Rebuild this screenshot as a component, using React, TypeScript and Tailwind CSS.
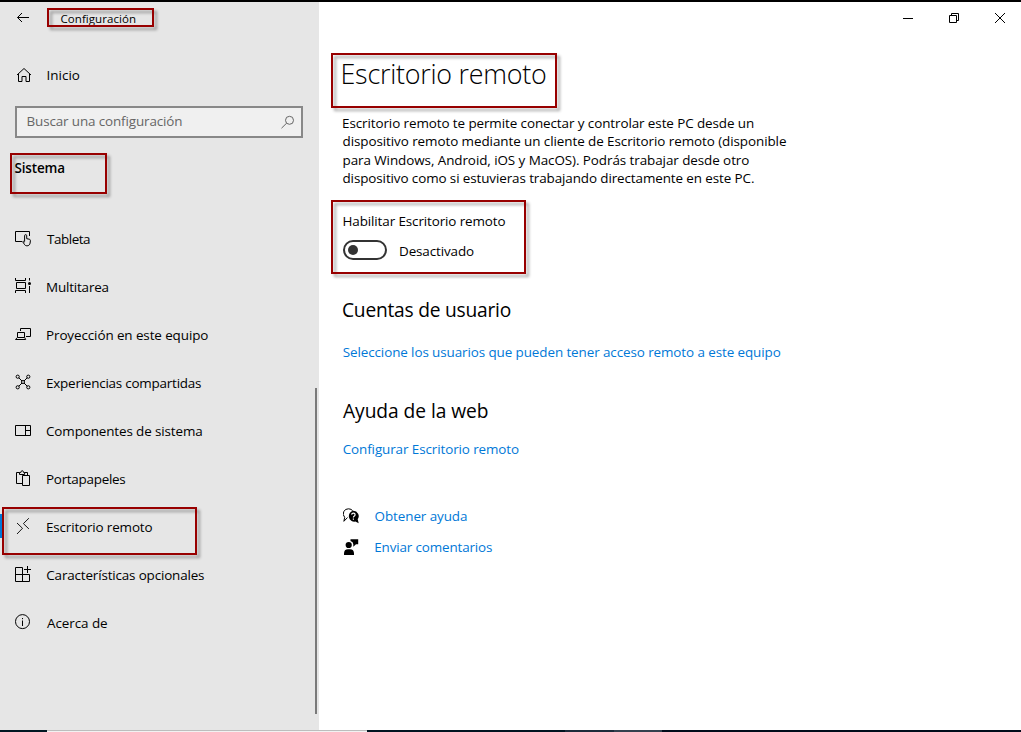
import type { ReactNode } from "react";

const stroke = { fill: "none", stroke: "currentColor", strokeWidth: 1 };

function Icon({ children, className = "" }: { children: ReactNode; className?: string }) {
  return (
    <svg viewBox="0 0 16 16" className={`size-4 shrink-0 overflow-visible ${className}`} {...stroke}>
      {children}
    </svg>
  );
}

function Marker({ className }: { className: string }) {
  return (
    <div
      className={`pointer-events-none absolute border-2 border-[#980000] drop-shadow-[3px_3px_1.5px_rgba(0,0,0,0.35)] ${className}`}
    />
  );
}

const navItems: { label: string; text: string; icon: ReactNode; active?: boolean }[] = [
  {
    label: "Tableta",
    text: "pl-[16px] tracking-[-0.45px]",
    icon: (
      <Icon>
        <path d="M7 10.5H.5V.5h14V5" />
        <path d="M9.6 10.6V4.7a1.05 1.05 0 0 1 2.1 0v3l2.6.5q1.2.3 1.1 1.5l-.3 2.4c-.3 1.7-1.4 2.7-3 2.7-1.4 0-2.2-.5-2.8-1.6L7.7 10.7q.8-.9 1.9.4" />
      </Icon>
    ),
  },
  {
    label: "Multitarea",
    text: "pl-[15px] tracking-[-0.18px]",
    icon: (
      <Icon className="-mt-[2px]">
        <path d="M.5 0v2.5h10V0M1.5 4.5h9v6h-9zM.5 15v-2.5h10V15M14.5 0v2.5M14.5 8v7" />
        <circle cx="14.5" cy="5.5" r="1.5" fill="currentColor" stroke="none" />
      </Icon>
    ),
  },
  {
    label: "Proyección en este equipo",
    text: "pl-[15px] tracking-[-0.1px]",
    icon: (
      <Icon>
        <path d="M5.5 4V1.5h10v8H11M2.5 5.5h7v5h-7zM2.3 10.5L.5 12.5h10.2l-1-2" />
      </Icon>
    ),
  },
  {
    label: "Experiencias compartidas",
    text: "pl-[15px] tracking-[-0.22px]",
    icon: (
      <Icon className="-mt-[2px]">
        <circle cx="2.7" cy="2.7" r="1.6" />
        <circle cx="13.3" cy="2.7" r="1.6" />
        <circle cx="2.7" cy="13.3" r="1.6" />
        <circle cx="13.3" cy="13.3" r="1.6" />
        <circle cx="8" cy="8" r="1.5" />
        <path d="M3.8 3.8L7 7M12.2 3.8L9 7M3.8 12.2L7 9M12.2 12.2L9 9" />
      </Icon>
    ),
  },
  {
    label: "Componentes de sistema",
    text: "pl-[15px] tracking-[-0.12px]",
    icon: (
      <Icon>
        <path d="M.5 2.5h15v10H.5zM10.5 2.5v10M10.5 7.5h5" />
      </Icon>
    ),
  },
  {
    label: "Portapapeles",
    text: "pl-[15px] tracking-[-0.27px]",
    icon: (
      <Icon className="-mt-[2px]">
        <path d="M7 13.5H1.5v-11h3M9.5 2.5h3V5M7.5 5.5h7v10h-7z" />
        <path d="M4.5 4.500v-2h1.300q.2-1.800 1.400-1.800t1.400 1.800h1v2z" />
      </Icon>
    ),
  },
  {
    label: "Escritorio remoto",
    text: "pl-[15px] tracking-[-0.15px]",
    active: true,
    icon: (
      <Icon className="-mt-[2px]">
        <path d="M2 5l5.500 5.300L2 16M13.900.2L8.400 5.600l5.500 5.300" strokeWidth=".9" />
      </Icon>
    ),
  },
  {
    label: "Características opcionales",
    text: "pl-[15.300px] tracking-[-0.16px]",
    icon: (
      <Icon className="-mt-[2px]">
        <path d="M7.500 1.500h-7v14h14v-7H.5M7.500 1.500v14M12.500 0v7M9 3.500h7" />
      </Icon>
    ),
  },
  {
    label: "Acerca de",
    text: "pl-[16px] tracking-[-0.06px]",
    icon: (
      <Icon className="-mt-[2px]">
        <circle cx="7.500" cy="7.600" r="7" />
        <path d="M7.500 6.500V12M7.500 4v1.200" />
      </Icon>
    ),
  },
];

function Sidebar() {
  return (
    <aside className="flex w-[319px] flex-col bg-[#e6e6e6]">
      <div className="flex h-8 items-center pl-[15px]">
        <Icon>
          <path d="M14 7.500H2.500M7 3L2.500 7.500 7 12" />
        </Icon>
        <span className="pl-[29.500px] pt-px text-[11.52px] tracking-[0.05px]">Configuración</span>
      </div>
      <div className="mt-[25px] flex h-8 items-center pl-[16px]">
        <Icon>
          <path d="M1 8L8 1.500 15 8M2.500 6.800v7.700h3.500V9.500h4v5h3.500V6.800" />
        </Icon>
        <span className="pl-[14.500px] tracking-[0.02px]">Inicio</span>
      </div>
      <div className="mt-[15px] ml-[15px] flex h-8 w-[288px] items-center justify-between border-2 border-[#888888] bg-[#f0f0f0] pr-[6px] pl-[9.500px] text-[#666666]">
        <span className="-mt-[2px] tracking-[-0.13px]">Buscar una configuración</span>
        <Icon>
          <circle cx="10.500" cy="6.300" r="4" />
          <path d="M7.600 9.200L2.500 14.200" />
        </Icon>
      </div>
      <h2 className="mt-[14px] flex h-8 items-center pl-[14.500px] font-semibold tracking-[-0.15px]">Sistema</h2>
      <nav className="mt-[31px]">
        {navItems.map((item) => (
          <div key={item.label} className="flex h-12 items-center">
            <span className={`h-6 w-[3px] shrink-0 ${item.active ? "-mt-[2px] bg-[#0078d7]" : ""}`} />
            <span className="w-3 shrink-0" />
            {item.icon}
            <span className={item.text}>{item.label}</span>
          </div>
        ))}
      </nav>
    </aside>
  );
}

function Content() {
  return (
    <main className="flex flex-1 flex-col">
      <div className="flex h-8 items-center justify-end gap-[30px] pr-[13px]">
        <Icon>
          <path d="M3 8.500h10" />
        </Icon>
        <Icon>
          <path d="M3.500 5.500h7v7h-7zM5.500 5.500v-2h7v7h-2" />
        </Icon>
        <Icon>
          <path d="M3 3l10 10M13 3L3 13" />
        </Icon>
      </div>
      <div className="pl-[23px]">
        <h1 className="mt-[20px] -ml-[1.500px] h-10 text-[26.88px] leading-10 font-[350] tracking-[-0.24px]">
          Escritorio remoto
        </h1>
        <p className="mt-5 flex flex-col leading-[18px] whitespace-nowrap">
          <span className="tracking-[-0.09px]">
            Escritorio remoto te permite conectar y controlar este PC desde un
          </span>
          <span className="pl-[0.500px] tracking-[-0.075px]">
            dispositivo remoto mediante un cliente de Escritorio remoto (disponible
          </span>
          <span className="pt-px pl-[0.500px] tracking-[-0.075px]">
            para Windows, Android, iOS y MacOS). Podrás trabajar desde otro
          </span>
          <span className="pl-[0.500px] tracking-[-0.105px]">
            dispositivo como si estuvieras trabajando directamente en este PC.
          </span>
        </p>
        <div className="mt-[24px] h-5 pl-[0.500px] leading-5 tracking-[-0.11px]">Habilitar Escritorio remoto</div>
        <div className="mt-[9px] flex h-5 items-center pl-px">
          <span className="flex h-5 w-11 items-center rounded-full border-2 border-[#333333] pl-[3px]">
            <span className="size-[10px] rounded-full bg-[#333333]" />
          </span>
          <span className="pt-[2px] pl-[12px] tracking-[-0.12px]">Desactivado</span>
        </div>
        <h2 className="mt-[34px] h-8 text-[19.2px] leading-8 tracking-[-0.23px]">Cuentas de usuario</h2>
        <a className="mt-4 block h-5 pl-[0.700px] leading-5 tracking-[-0.095px] text-[#0078d7]">
          Seleccione los usuarios que pueden tener acceso remoto a este equipo
        </a>
        <h2 className="mt-[33px] h-8 pl-px text-[19.2px] leading-8 tracking-[-0.05px]">Ayuda de la web</h2>
        <a className="mt-3 block h-5 pl-[0.700px] leading-5 tracking-[-0.1px] text-[#0078d7]">Configurar Escritorio remoto</a>
        <a className="mt-[47px] flex h-5 items-center text-[#0078d7]">
          <svg viewBox="0 0 16 16" className="ml-px size-4 text-black">
            <path
              d="M4.500 9.500L.9 13.300 1.700 9.300A5 5 0 0 1 5.500.8q3 0 4.300 2.200"
              fill="none"
              stroke="currentColor"
            />
            <path d="M10.300 2.800a5.300 5.300 0 0 1 4.400 8.400l1 4-3.300-1.600a5.400 5.400 0 1 1-2.100-10.800z" fill="currentColor" />
            <path d="M8.600 6.700q.2-1.500 1.800-1.500 1.700 0 1.700 1.500 0 .9-1 1.500-.7.500-.7 1.300M10.400 10.600v1.200" fill="none" stroke="white" strokeWidth="1.200" />
          </svg>
          <span className="pl-[15.600px] tracking-[-0.09px]">Obtener ayuda</span>
        </a>
        <a className="mt-[11px] flex h-5 items-center text-[#0078d7]">
          <svg viewBox="0 0 16 16" className="ml-px size-4 text-black" fill="currentColor">
            <circle cx="5.700" cy="6" r="3.100" />
            <path d="M1 16v-1.500q0-4.300 4-4.300h2q4 0 4 4.300V16zM7.500.2H15.200V5.200H13L10.300 7.800V5.200q0-2.300-2.800-3.200z" />
          </svg>
          <span className="pl-[15.300px] tracking-[-0.15px]">Enviar comentarios</span>
        </a>
      </div>
    </main>
  );
}

export default function App() {
  return (
    <div className="relative flex h-[732px] w-[1021px] flex-col overflow-hidden bg-white font-['Open_Sans',sans-serif] text-[13.44px] whitespace-nowrap text-black">
      <div className="h-[2px] bg-black" />
      <div className="flex h-[728px]">
        <Sidebar />
        <Content />
      </div>
      <div className="flex h-[2px] bg-[#000b1a]">
        <div className="w-[47px] bg-[#001722]" />
        <div className="w-[320px] border-t border-[#bdbdbd] bg-[#f2f2f2]" />
        <div className="w-[198px] bg-[#001420]" />
        <div className="w-[49px] bg-[#1c2b3a]" />
        <div className="w-[48px] bg-[#34414f]" />
      </div>
      <div className="absolute top-[388px] left-[315px] h-[326px] w-[2px] bg-[#7a7a7a]" />
      <Marker className="top-[8px] left-[47px] h-[19px] w-[107px]" />
      <Marker className="top-[153px] left-[10px] h-[41px] w-[97px]" />
      <Marker className="top-[507px] left-[2px] h-[48px] w-[195px]" />
      <Marker className="top-[53px] left-[331px] h-[55px] w-[226px]" />
      <Marker className="top-[200px] left-[331px] h-[74px] w-[195px]" />
    </div>
  );
}
